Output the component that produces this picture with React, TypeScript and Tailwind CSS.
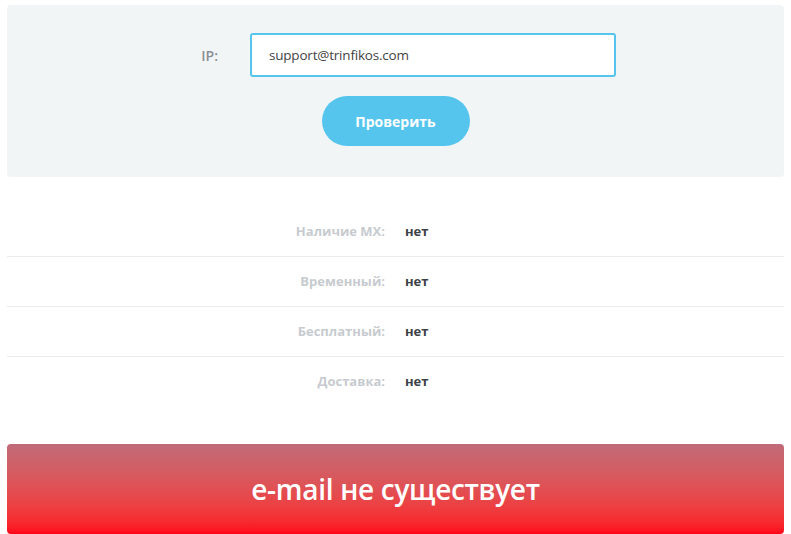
import React from "react";

const rows = [
  { label: "Наличие MX:", value: "нет" },
  { label: "Временный:", value: "нет" },
  { label: "Бесплатный:", value: "нет" },
  { label: "Доставка:", value: "нет" },
];

export default function App() {
  return (
    <div className="min-h-screen bg-white px-[7px] pt-[5px] font-['Open_Sans',sans-serif]">
      <div className="rounded-[4px] bg-[#f2f5f6] pt-[28px] pb-[31px]">
        <div className="flex items-center">
          <label className="w-[243px] pr-[32px] text-right text-[14px] font-semibold text-[#8a8f94]">IP:</label>
          <input
            defaultValue="support@trinfikos.com"
            className="h-[44px] w-[366px] rounded-[3px] border-2 border-[#56c5ee] bg-white px-[17px] text-[13.5px] tracking-[-0.2px] text-[#444] outline-none"
          />
        </div>
        <div className="mt-[19px] flex justify-center">
          <button
            type="button"
            className="h-[50px] w-[148px] rounded-full bg-[#56c5ed] text-[14px] font-bold text-white"
          >
            Проверить
          </button>
        </div>
      </div>

      <div className="mt-[30px]">
        {rows.map((r, i) => (
          <div
            key={i}
            className={
              "flex h-[50px] items-center text-[13px] font-bold" +
              (i < rows.length - 1 ? " border-b border-[#e9ebec]" : "")
            }
          >
            <div className="w-[378px] text-right text-[#c7cbcf]">{r.label}</div>
            <div className="pl-[20px] text-[#3d4248]">{r.value}</div>
          </div>
        ))}
      </div>

      <div className="mt-[37px] flex h-[90px] items-center justify-center rounded-[4px] bg-gradient-to-b from-[#c06b78] to-[#ff0019]">
        <span className="text-[28px] font-semibold tracking-[-0.3px] text-white">e-mail не существует</span>
      </div>
    </div>
  );
}
